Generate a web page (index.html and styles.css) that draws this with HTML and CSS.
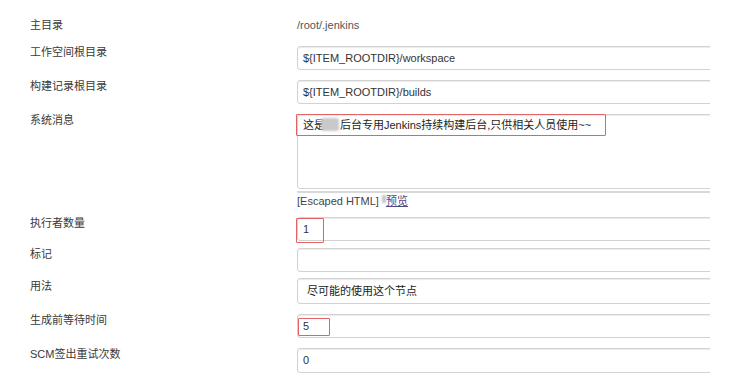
FILE: index.html
```html
<!DOCTYPE html>
<html lang="zh-CN">
<head>
<meta charset="utf-8">
<title>Jenkins 配置</title>
<link rel="stylesheet" href="styles.css">
</head>
<body>
<div class="form">
  <div class="row row-home">
    <div class="label">主目录</div>
    <div class="field"><span class="plain">/root/.jenkins</span></div>
  </div>
  <div class="row gap14">
    <div class="label">工作空间根目录</div>
    <div class="field"><div class="input">${ITEM_ROOTDIR}/workspace</div></div>
  </div>
  <div class="row gap10">
    <div class="label">构建记录根目录</div>
    <div class="field"><div class="input">${ITEM_ROOTDIR}/builds</div></div>
  </div>
  <div class="row gap10">
    <div class="label">系统消息</div>
    <div class="field">
      <div class="textarea">
        <span class="mark-line">这是<span class="blur"></span>后台专用Jenkins持续构建后台,只供相关人员使用~~</span>
      </div>
      <div class="resize-bar"></div>
      <div class="hint">[Escaped HTML] <span class="smudge"></span><a class="link" href="#">预览</a></div>
    </div>
  </div>
  <div class="row gap9">
    <div class="label">执行者数量</div>
    <div class="field"><div class="input">1<span class="mark mark-1"></span></div></div>
  </div>
  <div class="row gap7">
    <div class="label">标记</div>
    <div class="field"><div class="input"></div></div>
  </div>
  <div class="row gap6">
    <div class="label label-select">用法</div>
    <div class="field"><div class="input select">尽可能的使用这个节点</div></div>
  </div>
  <div class="row gap10">
    <div class="label">生成前等待时间</div>
    <div class="field"><div class="input">5<span class="mark mark-5"></span></div></div>
  </div>
  <div class="row gap10">
    <div class="label">SCM签出重试次数</div>
    <div class="field"><div class="input tall">0</div></div>
  </div>
</div>
</body>
</html>
```
FILE: styles.css
```css
html, body {
  margin: 0;
  padding: 0;
  background: #ffffff;
}
body {
  font-family: "Liberation Sans", Arial, "Noto Sans CJK SC", sans-serif;
  font-size: 11px;
  color: #333333;
}
.form {
  width: 710px;
  padding-top: 18px;
  overflow: hidden;
}
.row {
  display: grid;
  grid-template-columns: 267px 440px;
  padding-left: 30px;
}
.gap14 { margin-top: 14px; }
.gap10 { margin-top: 10px; }
.gap9 { margin-top: 9px; }
.gap7 { margin-top: 7px; }
.gap6 { margin-top: 6px; }
.label {
  line-height: 13px;
  color: #3a3a3a;
}
.label-select {
  padding-top: 2px;
}
.row-home .label,
.row-home .field {
  line-height: 14px;
}
.plain {
  color: #555555;
}
.field {
  position: relative;
}
.input {
  position: relative;
  width: 440px;
  height: 24px;
  box-sizing: border-box;
  border: 1px solid #d2d2d2;
  border-radius: 3px;
  box-shadow: inset 0 1px 1px rgba(0, 0, 0, 0.08);
  padding-left: 5px;
  line-height: 22px;
  color: #333333;
  background: #ffffff;
}
.input.select {
  height: 26px;
  line-height: 24px;
  padding-left: 9px;
  color: #222222;
}
.input.tall {
  height: 25px;
  line-height: 23px;
}
.textarea {
  width: 440px;
  height: 75px;
  box-sizing: border-box;
  border: 1px solid #d2d2d2;
  border-radius: 3px;
  box-shadow: inset 0 1px 1px rgba(0, 0, 0, 0.08);
  background: #ffffff;
}
.mark-line {
  display: inline-block;
  margin: -1px 0 0 -2px;
  padding: 3px 14px 3px 6px;
  line-height: 14px;
  border: 1.5px solid #e06464;
  border-radius: 1px;
  color: #1e1e1e;
}
.blur {
  display: inline-block;
  width: 18px;
  height: 13px;
  margin: 0 1px 0 -4px;
  vertical-align: -2px;
  background: #c9c9c9;
  border-radius: 3px;
  filter: blur(1px);
}
.resize-bar {
  width: 440px;
  height: 2px;
  margin-top: 2px;
  background: #d8d8d8;
}
.hint {
  line-height: 14px;
  margin-top: 1px;
  color: #444444;
}
.smudge {
  display: inline-block;
  width: 4px;
  height: 8px;
  background: #c4c4c4;
  filter: blur(1px);
  vertical-align: 2px;
}
.link {
  color: #4b4a86;
  text-decoration: underline;
}
.mark {
  position: absolute;
  border: 1.5px solid #e06464;
  border-radius: 1px;
  box-sizing: border-box;
}
.mark-1 {
  left: -2px;
  top: 0px;
  width: 28px;
  height: 25px;
}
.mark-5 {
  left: 0px;
  top: 3px;
  width: 32px;
  height: 18px;
}
```
